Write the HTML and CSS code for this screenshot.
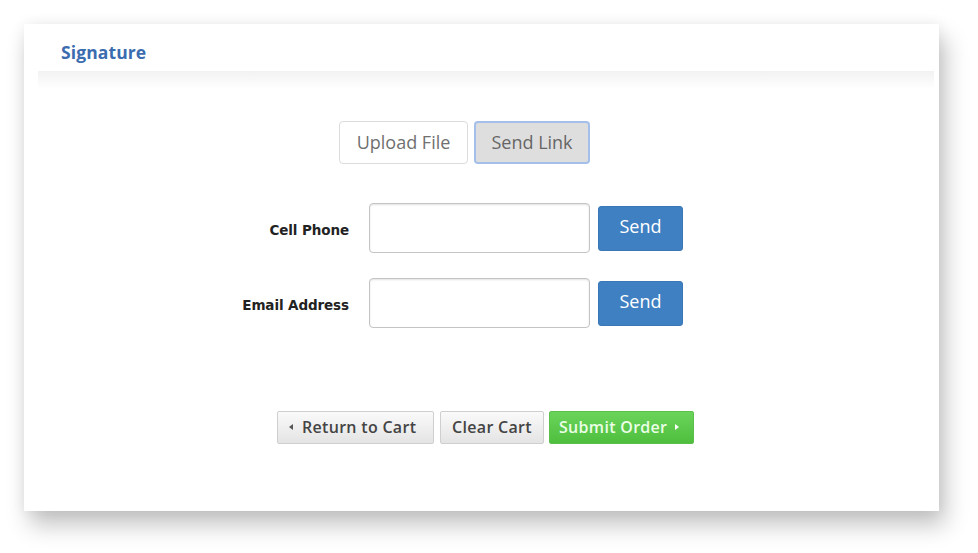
FILE: index.html
```html
<!DOCTYPE html>
<html>
<head>
<meta charset="utf-8">
<link rel="stylesheet" href="styles.css">
</head>
<body>
<div class="card">
  <div class="header"><span class="title">Signature</span></div>
  <div class="band"></div>
  <div class="toggle">
    <button class="tog">Upload File</button>
    <button class="tog active">Send Link</button>
  </div>
  <div class="form">
    <label class="lbl">Cell Phone</label>
    <input class="inp" type="text">
    <button class="send">Send</button>
    <label class="lbl">Email Address</label>
    <input class="inp" type="text">
    <button class="send">Send</button>
  </div>
  <div class="actions">
    <button class="act"><span class="tri-l"></span>Return to Cart</button>
    <button class="act">Clear Cart</button>
    <button class="act submit">Submit Order<span class="tri-r"></span></button>
  </div>
</div>
</body>
</html>
```
FILE: styles.css
```css
* { box-sizing: border-box; }
html, body { margin: 0; padding: 0; background: #fff; }
body { font-family: "Open Sans", "Noto Sans", sans-serif; width: 978px; height: 553px; overflow: hidden; padding: 24px 0 0 24px; }
.card {
  width: 915px; height: 487px; background: #fff;
  box-shadow: 6px 14px 22px rgba(0,0,0,0.24), 0 0 14px rgba(0,0,0,0.06);
  display: flex; flex-direction: column;
}
.header { height: 48px; padding: 16px 0 0 37px; }
.title { color: #3b6cb0; font-size: 17.5px; font-weight: 700; letter-spacing: 0.1px; line-height: 24px; }
.band { height: 18px; margin: -1px 5px 0 14px; background: linear-gradient(#f2f2f2, #fbfbfb 70%, #fff); }
.toggle { display: flex; gap: 6px; margin: 32px 0 0 315px; }
.tog {
  font-family: inherit; font-size: 18px; color: #707070; background: #fff;
  border: 1px solid #dcdcdc; border-radius: 4px; height: 43px; width: 129px; padding: 0 0 2px;
}
.tog.active { width: 116px; background: #dedede; border: 2px solid #a4bfe9; color: #666; }
.form {
  display: grid; grid-template-columns: 130px 221px 85px; column-gap: 20px; row-gap: 25px;
  margin: 39px 0 0 195px; align-items: center;
}
.form .send { margin-left: -12px; }
.lbl { text-align: right; font-size: 13.5px; font-weight: 700; color: #222; font-family: "DejaVu Sans", "Open Sans", sans-serif; letter-spacing: -0.1px; padding-top: 4px; }
.inp {
  height: 50px; width: 221px; border: 1px solid #c4c4c4; border-radius: 4px;
  box-shadow: inset 0 1px 2px rgba(0,0,0,0.12); background: #fff;
}
.send {
  height: 45px; width: 85px; background: #3f80c2; color: #fff; border: 1px solid #3a77b6;
  border-radius: 3px; font-family: inherit; font-size: 18px; padding: 0 0 4px;
}
.actions { display: flex; margin: 83px 0 0 253px; }
.act {
  height: 33px; font-family: "Open Sans", sans-serif; font-weight: 600; font-size: 16px; letter-spacing: 0.3px; color: #444;
  background: linear-gradient(#fafafa, #e4e4e4); border: 1px solid #cfcfcf; border-radius: 2px;
  padding: 0 0 2px 10px; display: flex; align-items: center; gap: 9px; white-space: nowrap;
}
.act:first-child { width: 157px; padding-left: 11px; }
.act:nth-child(2) { width: 104px; margin-left: 6px; justify-content: center; padding-left: 0; }
.submit { width: 145px; margin-left: 5px; background: linear-gradient(#6ad45a, #4fbe3e); border-color: #5ac04a; color: #eaffe6; gap: 8px; padding-left: 9px; }
.tri-l { flex: none; width: 0; height: 0; border-top: 3px solid transparent; border-bottom: 3px solid transparent; border-right: 4px solid #555; }
.tri-r { flex: none; width: 0; height: 0; border-top: 3px solid transparent; border-bottom: 3px solid transparent; border-left: 4px solid #fff; }
```
